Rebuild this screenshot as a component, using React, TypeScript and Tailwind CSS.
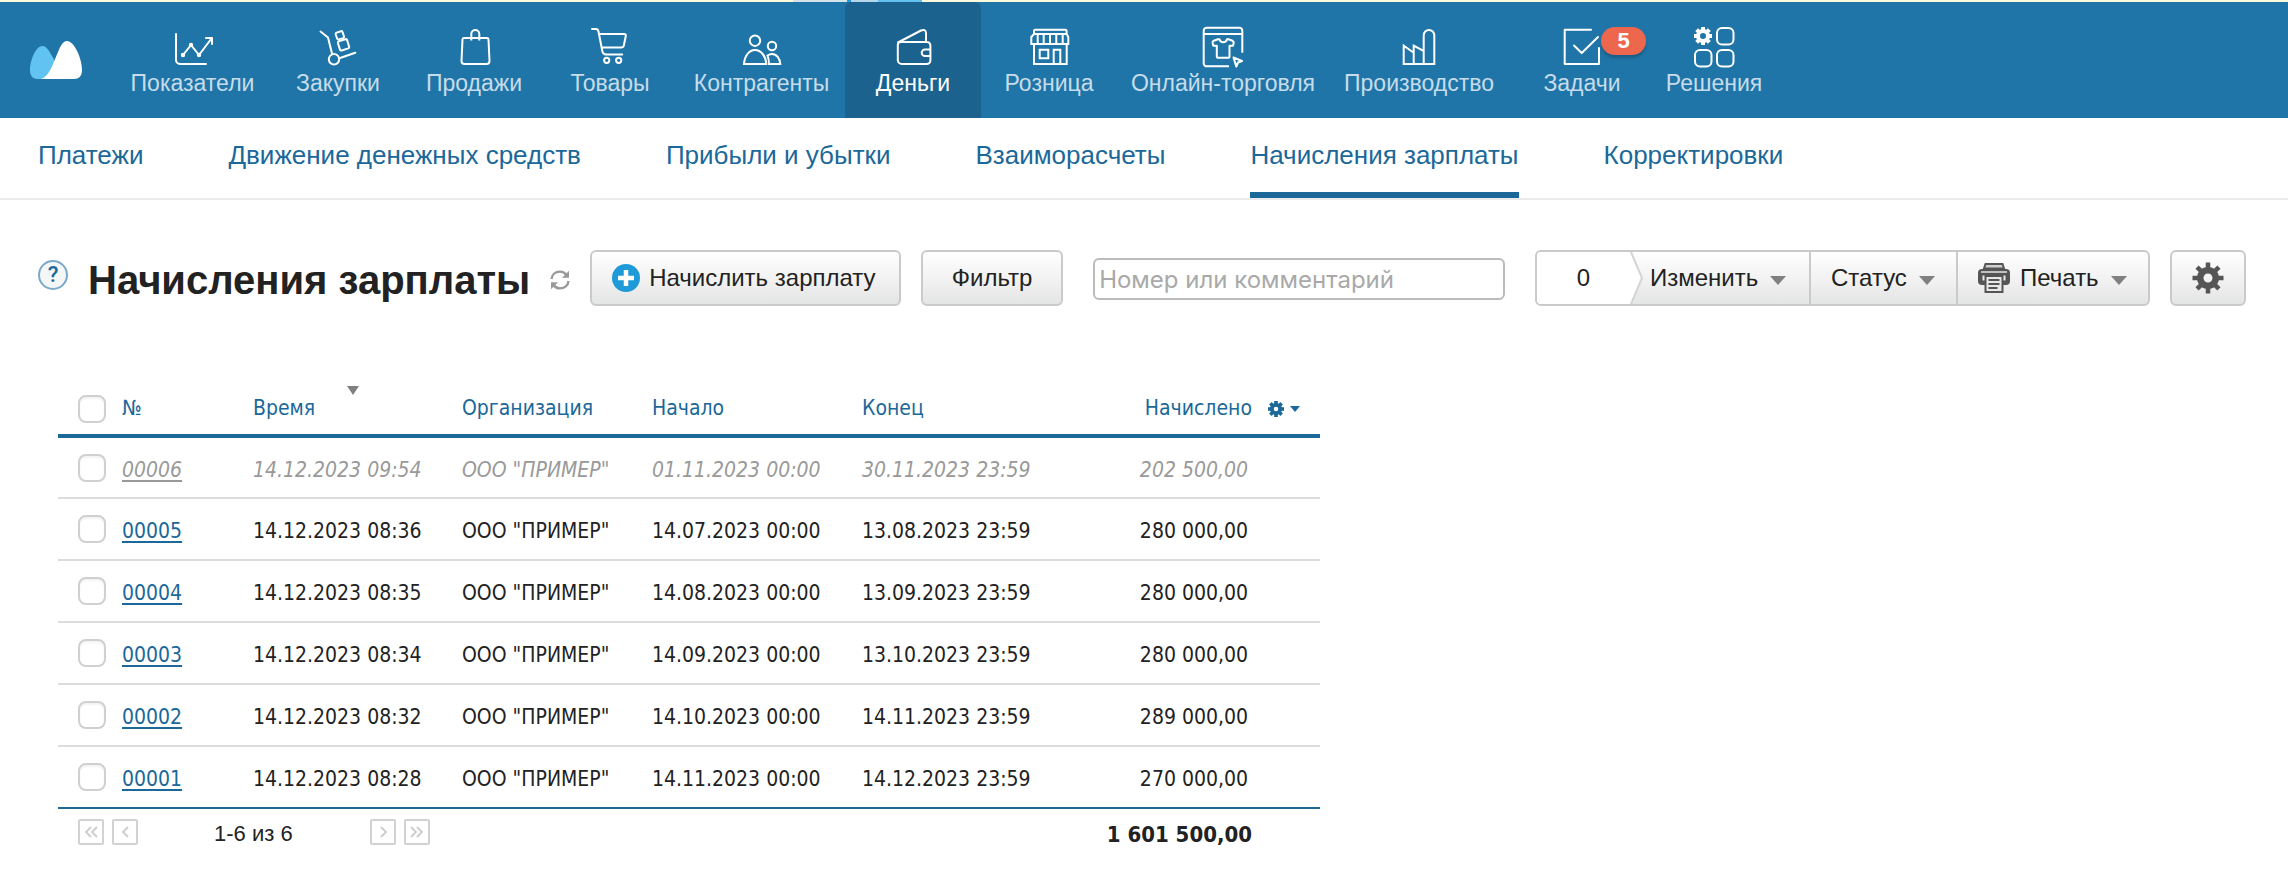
import type { ReactNode } from "react";

const HELVETICA = "font-['Liberation_Sans',Arial,sans-serif]";
const TAHOMA = "font-['DejaVu_Sans_Condensed','DejaVu_Sans',sans-serif]";

/* Cog with eight square teeth, drawn around 0,0 */
function Cog({ r, hole, teeth, width }: { r: number; hole: number; teeth: number; width: number }) {
  return (
    <g>
      <circle r={(r + hole) / 2} fill="none" stroke="currentColor" strokeWidth={r - hole} />
      {[0, 45, 90, 135, 180, 225, 270, 315].map((a) => (
        <rect
          key={a}
          x={-width / 2}
          y={-teeth}
          width={width}
          height={teeth - r + 1}
          fill="currentColor"
          transform={`rotate(${a})`}
        />
      ))}
    </g>
  );
}

function NavIcon({ children }: { children: ReactNode }) {
  return (
    <svg
      viewBox="0 0 40 40"
      className="size-10 overflow-visible text-white"
      fill="none"
      stroke="currentColor"
      strokeWidth="2"
      strokeLinecap="round"
      strokeLinejoin="round"
      aria-hidden="true"
    >
      {children}
    </svg>
  );
}

const icons = {
  chart: (
    <>
      <path d="M3 7v26a4 4 0 0 0 4 4h26" />
      <path d="M10 28l8-10 8 10 12.5-16.5M33 11h6v6" />
      <g fill="currentColor" stroke="none">
        <circle cx="10" cy="28" r="2.2" />
        <circle cx="18" cy="18" r="2.2" />
        <circle cx="26" cy="28" r="2.2" />
      </g>
    </>
  ),
  cart: (
    <>
      <path d="M2.5 4.5l7.5 6 4 16M21.3 31.3l16-5.6" />
      <circle cx="16" cy="32.3" r="5.2" />
      <path d="M18.6 5.6l4.4-1.4q1.3-.3 1.6.9l1.4 4.4q.3 1.2-.9 1.6l-4.4 1.3q-1.2.3-1.6-.9l-1.4-4.3q-.3-1.2.9-1.6z" />
      <path d="M20.8 14.2l6.6-2q1.3-.4 1.7.9l2.1 6.6q.4 1.3-.9 1.7l-6.6 2.1q-1.3.4-1.7-.9l-2.1-6.6q-.4-1.3.9-1.8z" />
    </>
  ),
  bag: (
    <>
      <path d="M10 11h23q1.4 0 1.5 1.5l1 21.500q0 3-3 3h-22q-3 0-3-3l1-21.500q.1-1.500 1.500-1.500z" />
      <path d="M17.300 13.500v-6.500a4 4 0 0 1 8 0v6.500" strokeLinecap="butt" />
    </>
  ),
  basket: (
    <>
      <path d="M2 2h4q2 0 2.500 2.500l3.700 19q.700 4 4 4h16" />
      <path d="M9.500 7h24.500q2.200 0 1.800 2l-2 9.500q-.500 2-2.500 2h-19" />
      <circle cx="16.700" cy="33.300" r="2.600" />
      <circle cx="28.700" cy="33.300" r="2.600" />
    </>
  ),
  people: (
    <g strokeLinejoin="miter">
      <circle cx="13" cy="13.700" r="5.200" />
      <path d="M2 37c.5-8 5-14 11-14s10.800 6 11.300 14z" />
      <circle cx="30" cy="19" r="4.200" />
      <path d="M25.500 28.500c1.500-1 2.800-1.500 4.500-1.500 4.500 0 8 4.500 8.300 10h-11.300c0-3-.5-6-1.500-8.500z" />
    </g>
  ),
  wallet: (
    <>
      <path d="M8 15h26a3.400 3.400 0 0 1 3.400 3.400v15a3.600 3.600 0 0 1-3.600 3.600h-25a4 4 0 0 1-4-4v-15q0-3 3.200-3zM5 15.500l23-12q4.500-1.800 5 2.500v9" />
      <path d="M37 22.500h-5a3.300 3.300 0 0 0 0 6.600h5" />
    </>
  ),
  shop: (
    <g strokeLinejoin="miter" strokeLinecap="butt">
      <path d="M5 8v-4q0-1.300 1.300-1.300h30q1.300 0 1.300 1.300v4M5 7h32.700l1.600 3v7h-37v-7zM8.700 7v10M14.700 7v10M21 7v10M27.300 7v10M33.700 7v10" />
      <path d="M5 17v20h32.700v-20M10.700 22.700h8.600v8.600h-8.600zM24.700 37v-14.300h6.600v14.300" />
    </g>
  ),
  online: (
    <g strokeLinecap="butt">
      <path d="M26 39.300h-22.300a3 3 0 0 1-3-3v-32.600a3 3 0 0 1 3-3h32.600a3 3 0 0 1 3 3v22M1 7h38" />
      <path d="M15 12.300h1.500c1 4 6.500 4 7.500 0h1.500l4 1.500q1.500.700 1.200 2l-.700 3h-3.500v11q0 1-1 1h-10.700q-1 0-1-1v-11h-3.500l-.700-3q-.300-1.500 1.200-2z" />
      <path d="M30.500 30.500l8.500 3.500-4 1.500-1.700 4z" />
    </g>
  ),
  factory: (
    <g strokeLinejoin="miter">
      <path d="M4.700 37v-18.300l10 7v-7l10 5.300v-15.700a5.300 5.300 0 0 1 10.600 0v28.700zM14.700 25v12M24.700 23v14" />
    </g>
  ),
  tasks: (
    <g>
      <path d="M29 2.700h-26.300v34.300h34.300v-16" />
      <path d="M12 18.500l7.700 7.500 16.300-16" />
    </g>
  ),
  solutions: (
    <>
      <rect x="23" y="1" width="16.500" height="16.500" rx="5" />
      <rect x="1" y="23" width="16.500" height="16.500" rx="5" />
      <rect x="23" y="23" width="16.500" height="16.500" rx="5" />
      <g transform="translate(9 9)" stroke="none">
        <Cog r={7} hole={3} teeth={9} width={4} />
      </g>
    </>
  ),
};

const nav: { label: string; icon: ReactNode; width: string; active?: boolean; badge?: number }[] = [
  { label: "Показатели", icon: icons.chart, width: "w-[155px]" },
  { label: "Закупки", icon: icons.cart, width: "w-[136px]" },
  { label: "Продажи", icon: icons.bag, width: "w-[136px]" },
  { label: "Товары", icon: icons.basket, width: "w-[136px]" },
  { label: "Контрагенты", icon: icons.people, width: "w-[167px]" },
  { label: "Деньги", icon: icons.wallet, width: "w-[136px]", active: true },
  { label: "Розница", icon: icons.shop, width: "w-[136px]" },
  { label: "Онлайн-торговля", icon: icons.online, width: "w-[212px]" },
  { label: "Производство", icon: icons.factory, width: "w-[180px]" },
  { label: "Задачи", icon: icons.tasks, width: "w-[146px]", badge: 5 },
  { label: "Решения", icon: icons.solutions, width: "w-[118px]" },
];

const tabs = [
  "Платежи",
  "Движение денежных средств",
  "Прибыли и убытки",
  "Взаиморасчеты",
  "Начисления зарплаты",
  "Корректировки",
];

const rows = [
  { id: "00006", time: "14.12.2023 09:54", start: "01.11.2023 00:00", end: "30.11.2023 23:59", sum: "202 500,00", draft: true },
  { id: "00005", time: "14.12.2023 08:36", start: "14.07.2023 00:00", end: "13.08.2023 23:59", sum: "280 000,00" },
  { id: "00004", time: "14.12.2023 08:35", start: "14.08.2023 00:00", end: "13.09.2023 23:59", sum: "280 000,00" },
  { id: "00003", time: "14.12.2023 08:34", start: "14.09.2023 00:00", end: "13.10.2023 23:59", sum: "280 000,00" },
  { id: "00002", time: "14.12.2023 08:32", start: "14.10.2023 00:00", end: "14.11.2023 23:59", sum: "289 000,00" },
  { id: "00001", time: "14.12.2023 08:28", start: "14.11.2023 00:00", end: "14.12.2023 23:59", sum: "270 000,00" },
];

function Caret() {
  return (
    <svg viewBox="0 0 16 9" className="mt-1 h-[9px] w-4 text-[#808080]" aria-hidden="true">
      <path d="M0 0h16l-8 9z" fill="currentColor" />
    </svg>
  );
}

function Header() {
  return (
    <header>
      {/* Sliver of the page banner above the bar */}
      <div className="flex h-[2px] bg-[#fcfadb] pl-[793px]">
        <div className="w-[54px] bg-[#d5e2ea]" />
        <div className="w-1 bg-[#1c9add]" />
        <div className="w-[27px] bg-[#b5d6ea]" />
        <div className="w-11 bg-[#62c1ee]" />
      </div>
      <div className="flex h-[116px] items-stretch bg-[#1f75a8]">
        <a href="#" aria-label="Главная" className="flex w-[115px] shrink-0 pt-[39px] pl-[30px]">
          <svg viewBox="0 0 52 38" className="h-[38px] w-[52px]" aria-hidden="true">
            <path d="M12 38H7C2.500 38 0 34.500 0 29 0 19 6 5 12.500 5 17.500 5 20 12 25 20L20 34Z" fill="#61c3f2" />
            <path d="M11 38C20 35 23 22 28 11 31 4 33 0 37 0 44 0 52 17 52 29 52 35 49 38 44 38Z" fill="#fff" />
          </svg>
        </a>
        <nav className="flex">
          {nav.map((n) => (
            <a
              key={n.label}
              href="#"
              className={`${n.width} flex flex-col items-center pt-[25px] text-[23px] leading-7 whitespace-nowrap ${
                n.active ? "rounded-t-md bg-[#1b628f] text-white" : "text-[#c7dcea]"
              }`}
            >
              <span className="relative">
                <NavIcon>{n.icon}</NavIcon>
                {n.badge && (
                  <span className="absolute top-0 left-[39px] flex h-7 w-[45px] items-center justify-center rounded-full bg-[#ed674e] text-[22px] font-bold text-white shadow-[0_3px_3px_rgba(0,0,0,0.2)]">
                    {n.badge}
                  </span>
                )}
              </span>
              <span className="mt-[2px]">{n.label}</span>
            </a>
          ))}
        </nav>
      </div>
      <nav className="flex h-[82px] gap-[85px] border-b-2 border-[#ebebeb] pl-[38px] text-[26px] leading-9 whitespace-nowrap text-[#1b6899]">
        {tabs.map((t) => (
          <a
            key={t}
            href="#"
            className={`border-b-6 pt-[19px] ${t === "Начисления зарплаты" ? "border-[#1b6899]" : "border-transparent"}`}
          >
            {t}
          </a>
        ))}
      </nav>
    </header>
  );
}

function Toolbar() {
  const grad = "bg-linear-to-b from-white to-[#e4e6e5]";
  const box = `flex h-14 shrink-0 items-center rounded-md border-2 border-[#cacaca] ${grad}`;
  return (
    <div className="flex items-center pt-[50px] pr-[42px] pl-[38px] text-[24px] whitespace-nowrap text-[#222]">
      <button
        aria-label="Справка"
        className="mb-[6px] flex size-[30px] shrink-0 items-center justify-center rounded-full border-2 border-[#7ba9c9] bg-[#f4f6f7] font-[Roboto,sans-serif] text-[22px] leading-none font-medium text-[#1b6899]"
      >
        ?
      </button>
      <h1 className="mt-1 ml-5 text-[40px] leading-[48px] font-bold">Начисления зарплаты</h1>
      <button aria-label="Обновить" className="mt-1 ml-5 shrink-0">
        <svg viewBox="0 0 20 20" className="size-5 text-[#999]" fill="none" stroke="currentColor" strokeWidth="2.400" aria-hidden="true">
          <path d="M1.500 9C2 4.500 5.500 1.600 10 1.600c3 0 5 1.200 6.500 3.400M18.500 11c-.5 4.500-4 7.400-8.500 7.400-3 0-5-1.200-6.500-3.400" />
          <path d="M19 .8v7h-7zM1 19.200v-7h7z" fill="currentColor" stroke="none" />
        </svg>
      </button>
      <button className={`${box} ml-5 w-[311px] pl-5`}>
        <svg viewBox="0 0 28 28" className="mr-[9px] size-7" aria-hidden="true">
          <circle cx="14" cy="14" r="14" fill="#1d9ad7" />
          <path d="M14 6v16M6 14h16" stroke="#fff" strokeWidth="4.500" />
        </svg>
        Начислить зарплату
      </button>
      <button className={`${box} ml-5 w-[142px] justify-center`}>Фильтр</button>
      <input
        type="text"
        aria-label="Номер или комментарий"
        placeholder="Номер или комментарий"
        className="mt-[2px] ml-[30px] h-[42px] w-[412px] rounded-md border-2 border-[#bbb] px-1 font-['Inter',sans-serif] text-[24px] placeholder:text-[#a9a9a9]"
      />
      <div className={`${box} ml-[30px] overflow-hidden`}>
        <span className="flex h-full w-[93px] items-center justify-center bg-white">0</span>
        <svg viewBox="0 0 14 52" className="h-[52px] w-[14px]" aria-hidden="true">
          <path d="M0 0h1l11 26L1 52H0z" fill="#fff" />
          <path d="M1 0l11 26L1 52" fill="none" stroke="#d4d4d4" strokeWidth="2" />
        </svg>
        <button className="flex h-full w-[167px] items-center gap-3 border-r-2 border-[#cacaca] pl-[6px]">
          Изменить
          <Caret />
        </button>
        <button className="flex h-full w-[147px] items-center gap-3 border-r-2 border-[#cacaca] pl-5">
          Статус
          <Caret />
        </button>
        <button className="flex h-full w-[190px] items-center pl-5">
          {/* Printer */}
          <svg viewBox="0 0 32 30" className="mr-[10px] h-[30px] w-8" aria-hidden="true">
            <path d="M7.500 1h17l1.500 4.500H6z" fill="#cfcfcf" stroke="#555" strokeWidth="2" />
            <path d="M4 6h24a4 4 0 0 1 4 4v8a4 4 0 0 1-4 4H4a4 4 0 0 1-4-4v-8a4 4 0 0 1 4-4z" fill="#555" />
            <path d="M3 9h26" stroke="#ddd" strokeWidth="1.600" />
            <path d="M4.500 12.500h23v5h-23z" fill="#e8e8e8" />
            <path d="M7.500 13h17v16h-17z" fill="#e8e8e8" stroke="#555" strokeWidth="2" />
            <path d="M10.500 17h11M10.500 21h11M10.500 25h9" stroke="#555" strokeWidth="1.800" />
          </svg>
          <span className="mr-3">Печать</span>
          <Caret />
        </button>
      </div>
      <button aria-label="Настройки" className={`${box} ml-5 w-[76px] justify-center`}>
        <svg viewBox="-16 -16 32 32" className="size-8 text-[#555]" aria-hidden="true">
          <Cog r={11} hole={4.500} teeth={15.500} width={4.500} />
        </svg>
      </button>
    </div>
  );
}

function Check({ label }: { label: string }) {
  return (
    <input
      type="checkbox"
      aria-label={label}
      className="ml-5 block size-7 appearance-none rounded-lg border-2 border-[#d0d0d0] bg-white shadow-[inset_0_2px_2px_rgba(0,0,0,0.05)]"
    />
  );
}

function PageButton({ label, d }: { label: string; d: string }) {
  return (
    <button
      aria-label={label}
      disabled
      className="flex size-[26px] items-center justify-center rounded-xs border-2 border-[#d2d2d2] bg-white"
    >
      <svg viewBox="0 0 14 12" className="h-3 w-[14px]" fill="none" stroke="#ccc" strokeWidth="1.800" aria-hidden="true">
        <path d={d} />
      </svg>
    </button>
  );
}

function SalaryTable() {
  return (
    <table className={`${TAHOMA} mt-16 ml-[58px] w-[1262px] table-fixed border-collapse text-left text-[21px] whitespace-nowrap text-[#222]`}>
      <colgroup>
        <col className="w-16" />
        <col className="w-[131px]" />
        <col className="w-[209px]" />
        <col className="w-[190px]" />
        <col className="w-[210px]" />
        <col className="w-[200px]" />
        <col className="w-[190px]" />
        <col />
      </colgroup>
      <thead>
        <tr className="h-[66px] border-b-4 border-[#1b6899] text-[#1b6899] *:pt-[14px] *:font-normal">
          <th>
            <Check label="Выбрать все" />
          </th>
          <th>№</th>
          <th>
            <span className="relative">
              Время
              <svg viewBox="0 0 12 9" className="absolute -top-[10px] left-[94px] h-[9px] w-3 text-[#808080]" aria-hidden="true">
                <path d="M0 0h12l-6 9z" fill="currentColor" />
              </svg>
            </span>
          </th>
          <th>Организация</th>
          <th>Начало</th>
          <th>Конец</th>
          <th className="text-right">Начислено</th>
          <th>
            <button aria-label="Настройка столбцов" className="ml-4 flex items-center gap-[6px]">
              <svg viewBox="-8 -8 16 16" className="size-4" aria-hidden="true">
                <Cog r={6} hole={2.300} teeth={8} width={3.600} />
              </svg>
              <svg viewBox="0 0 10 6" className="h-[6px] w-[10px]" aria-hidden="true">
                <path d="M0 0h10l-5 6z" fill="currentColor" />
              </svg>
            </button>
          </th>
        </tr>
      </thead>
      <tbody>
        {rows.map((r) => (
          <tr
            key={r.id}
            className={`h-[62px] border-b-2 border-[#dcdcdc] last:border-[#1b6899] ${r.draft ? "text-[#999] italic" : ""}`}
          >
            <td>
              <Check label={r.id} />
            </td>
            <td className="pt-[6px]">
              <a href="#" className={`underline decoration-2 underline-offset-3 ${r.draft ? "" : "text-[#1b6899]"}`}>
                {r.id}
              </a>
            </td>
            <td className="pt-[6px]">{r.time}</td>
            <td className="pt-[6px]">ООО "ПРИМЕР"</td>
            <td className="pt-[6px]">{r.start}</td>
            <td className="pt-[6px]">{r.end}</td>
            <td className="pt-[6px] pr-1 text-right">{r.sum}</td>
            <td />
          </tr>
        ))}
      </tbody>
      <tfoot>
        <tr className="h-[46px]">
          <td colSpan={5}>
            <div className={`${HELVETICA} flex items-center gap-2 pl-5 text-[22px]`}>
              <PageButton label="В начало" d="M7 1L2 6l5 5M13 1L8 6l5 5" />
              <PageButton label="Назад" d="M10 1L5 6l5 5" />
              <span className="w-[216px] pt-1 pl-[68px] leading-6">1-6 из 6</span>
              <PageButton label="Вперёд" d="M5 1l5 5-5 5" />
              <PageButton label="В конец" d="M1 1l5 5-5 5M7 1l5 5-5 5" />
            </div>
          </td>
          <td colSpan={2} className="pt-[6px] text-right text-[22px] font-bold">
            1 601 500,00
          </td>
          <td />
        </tr>
      </tfoot>
    </table>
  );
}

export default function App() {
  return (
    <div className={`${HELVETICA} min-h-screen bg-white`}>
      <Header />
      <Toolbar />
      <SalaryTable />
    </div>
  );
}
